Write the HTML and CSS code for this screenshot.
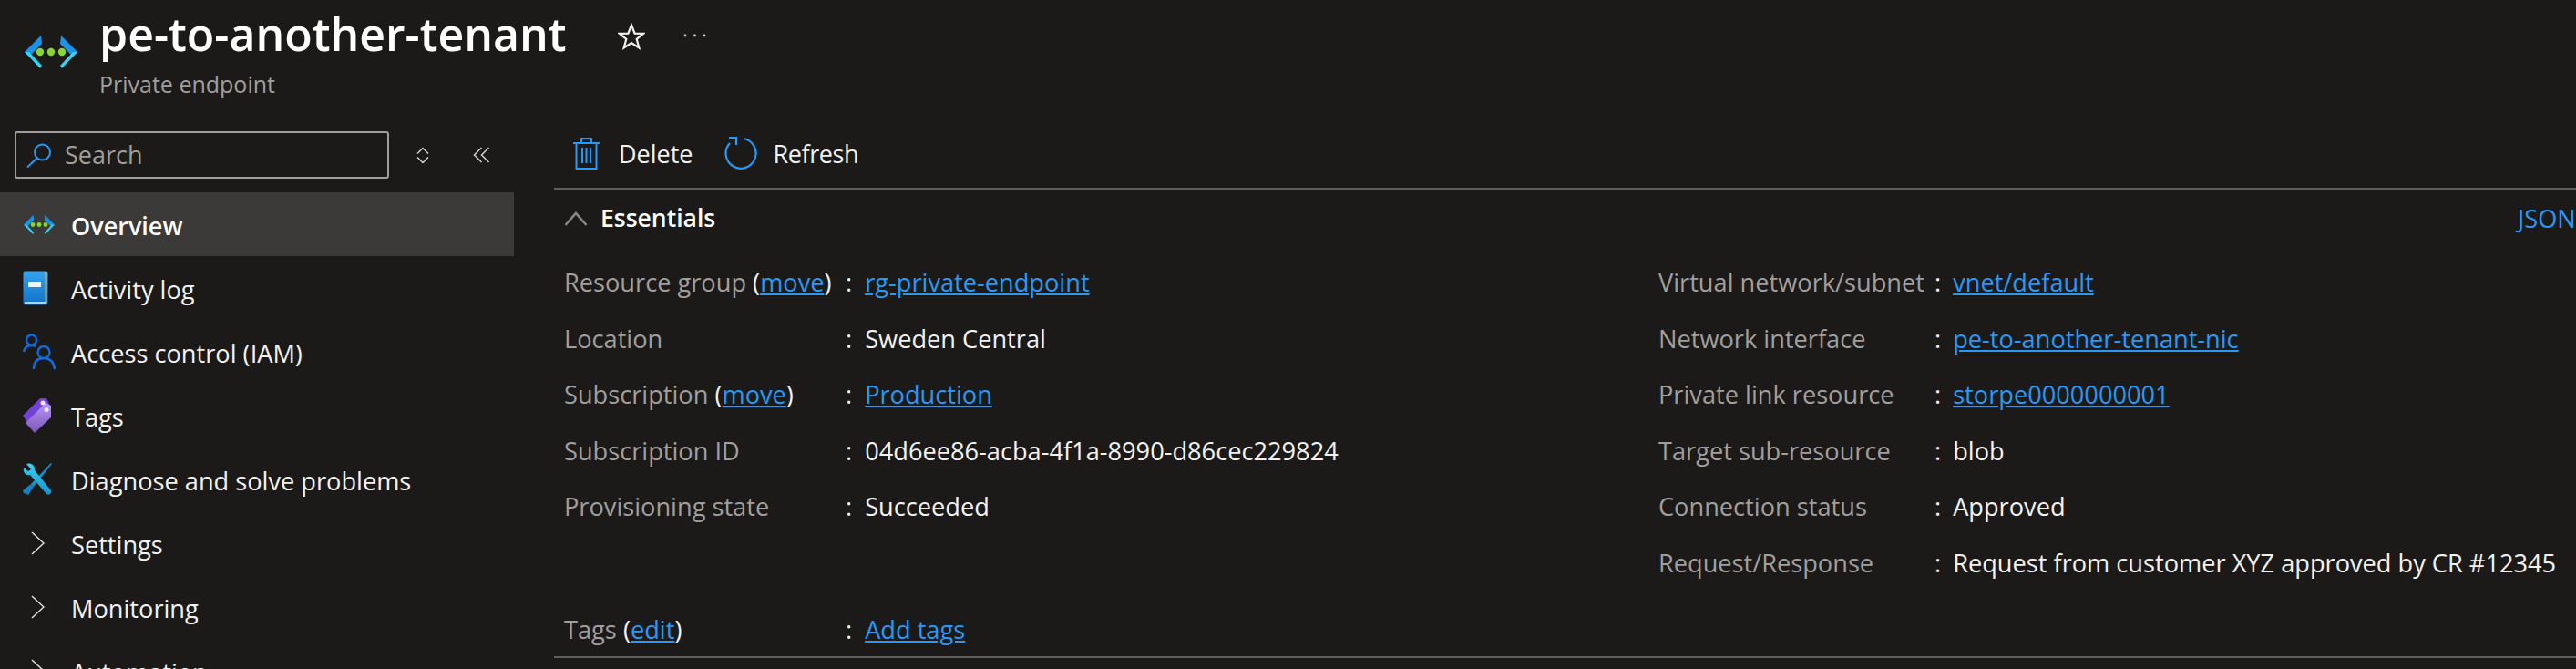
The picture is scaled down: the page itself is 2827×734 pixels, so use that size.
FILE: index.html
```html
<!DOCTYPE html>
<html lang="en">
<head>
<meta charset="utf-8">
<title>pe-to-another-tenant</title>
<link rel="stylesheet" href="styles.css">
</head>
<body>
<svg class="defs" width="0" height="0" aria-hidden="true">
  <defs>
    <linearGradient id="bookG" x1="0" y1="0" x2="0" y2="1"><stop offset="0" stop-color="#37a4ec"/><stop offset="1" stop-color="#0f70c8"/></linearGradient>
    <linearGradient id="tagG" x1="0" y1="0" x2="0" y2="1"><stop offset="0" stop-color="#b796f9"/><stop offset="1" stop-color="#7d55b8"/></linearGradient>
    <linearGradient id="wrenchG" x1="0" y1="0" x2="0" y2="1"><stop offset="0" stop-color="#32d4f5"/><stop offset="1" stop-color="#1a8fca"/></linearGradient>
    <symbol id="pe" viewBox="0 0 62 38">
      <path d="M20 1 L2 19 L7 24 L21 10 Z" fill="#1b93eb"/>
      <path d="M2 19 L19 37 L21 34 L7 19 Z" fill="#32d4f5"/>
      <path d="M42 1 L60 19 L55 24 L41 10 Z" fill="#1b93eb"/>
      <path d="M60 19 L43 37 L41 34 L55 19 Z" fill="#32d4f5"/>
      <circle cx="19" cy="19" r="4.2" fill="#86d633"/>
      <circle cx="31" cy="19" r="4.2" fill="#86d633"/>
      <circle cx="43" cy="19" r="4.2" fill="#86d633"/>
    </symbol>
  </defs>
</svg>

<header class="page-header">
  <svg class="logo" width="62" height="38"><use href="#pe"/></svg>
  <div class="titles">
    <h1 class="title">pe-to-another-tenant</h1>
    <div class="subtitle">Private endpoint</div>
  </div>
  <svg class="star" width="30" height="30" viewBox="0 0 30 30"><path d="M15 2.5 L18.6 11.6 L28 11.9 L20.7 18 L23.3 27.5 L15 22 L6.7 27.5 L9.3 18 L2 11.9 L11.4 11.6 Z" fill="none" stroke="#f3f2f1" stroke-width="2.2" stroke-linejoin="miter"/></svg>
  <svg class="more" width="26" height="4" viewBox="0 0 26 4"><circle cx="2" cy="2" r="1.4" fill="#d2d0ce"/><circle cx="12.500" cy="2" r="1.4" fill="#d2d0ce"/><circle cx="23" cy="2" r="1.4" fill="#d2d0ce"/></svg>
</header>

<div class="layout">
  <nav class="sidebar">
    <div class="search-row">
      <div class="search-box">
        <svg class="search-icon" width="28" height="27" viewBox="0 0 28 27"><circle cx="17.500" cy="10" r="8.500" fill="none" stroke="#2899f5" stroke-width="2"/><path d="M11.500 16.500 L1 26.500" stroke="#2899f5" stroke-width="2" fill="none"/></svg>
        <span class="search-text">Search</span>
      </div>
      <svg class="updown" width="16" height="19" viewBox="0 0 16 19"><path d="M2 7.500 L8 1.500 L14 7.500 M2 11.500 L8 17.500 L14 11.500" fill="none" stroke="#d2d0ce" stroke-width="1.500"/></svg>
      <svg class="collapse" width="19" height="18" viewBox="0 0 19 18"><path d="M9.500 1 L1.500 9 L9.500 17 M17.500 1 L9.500 9 L17.500 17" fill="none" stroke="#d2d0ce" stroke-width="1.500"/></svg>
    </div>
    <ul class="nav">
      <li class="nav-item active"><span class="nav-icon"><svg width="36" height="25"><use href="#pe"/></svg></span>Overview</li>
      <li class="nav-item"><span class="nav-icon"><svg width="28" height="38" viewBox="0 0 28 38"><rect x="0.500" y="0.500" width="27" height="37" rx="2" fill="url(#bookG)"/><path d="M25.500 1 V35 H2" fill="none" stroke="#e8f4fd" stroke-width="1.500"/><rect x="6" y="12" width="14" height="6" fill="#f0f6fb"/></svg></span>Activity log</li>
      <li class="nav-item"><span class="nav-icon"><svg width="36" height="40" viewBox="0 0 36 40"><g fill="none" stroke="#0f6cde" stroke-width="2.400"><circle cx="9.500" cy="7" r="5.500"/><path d="M1 20 C2 15 5 13 9.500 13 C11 13 13 13.500 14 14.500"/><circle cx="23" cy="20.500" r="6.500"/><path d="M12 39 C12 31 16 27 23 27 C30 27 34 31 35 39"/></g></svg></span>Access control (IAM)</li>
      <li class="nav-item"><span class="nav-icon"><svg width="32" height="38" viewBox="0 0 32 38"><path d="M0 19 L19 0 L26 0 L29 6 L29 10 L8 31 Z" fill="#7340d8"/><path d="M3 27 L25 5 L31 8 L31 21 L13 38 Z" fill="url(#tagG)"/><circle cx="22" cy="5" r="2.500" fill="#efe6ff"/><circle cx="26" cy="12.500" r="2.500" fill="#efe6ff"/></svg></span>Tags</li>
      <li class="nav-item"><span class="nav-icon"><svg width="32" height="36" viewBox="0 0 32 36"><path d="M31 0 L32 1 L12 26 L9 23 Z" fill="#1a8fca"/><path d="M9 23 L12 26 L6 35 L1 33 L0 30 Z" fill="#1a7fbf"/><path d="M4 1 C9 -1 14 3 13 8 L31 30 C32 33 29 36 26 34 L8 13 C3 14 0 10 1 5 L6 9 L9 7 Z" fill="url(#wrenchG)"/></svg></span>Diagnose and solve problems</li>
      <li class="nav-item"><span class="nav-icon"><svg class="chev" width="15" height="26" viewBox="0 0 15 26"><path d="M1 1 L14 13 L1 25" fill="none" stroke="#e1dfdd" stroke-width="1.500"/></svg></span>Settings</li>
      <li class="nav-item"><span class="nav-icon"><svg class="chev" width="15" height="26" viewBox="0 0 15 26"><path d="M1 1 L14 13 L1 25" fill="none" stroke="#e1dfdd" stroke-width="1.500"/></svg></span>Monitoring</li>
      <li class="nav-item"><span class="nav-icon"><svg class="chev" width="15" height="26" viewBox="0 0 15 26"><path d="M1 1 L14 13 L1 25" fill="none" stroke="#e1dfdd" stroke-width="1.500"/></svg></span>Automation</li>
    </ul>
  </nav>

  <main class="content">
    <div class="toolbar">
      <button class="tool delete">
        <svg width="29" height="35" viewBox="0 0 29 35"><g fill="none" stroke="#2899f5" stroke-width="2"><path d="M0 6 H29"/><path d="M9 6 V1 H20 V6"/><path d="M3.500 6 V34 H25.500 V6"/><path d="M10 11 V28 M14.500 11 V28 M19 11 V28"/></g></svg>
        <span>Delete</span>
      </button>
      <button class="tool refresh">
        <svg width="36" height="36" viewBox="0 0 36 36"><g fill="none" stroke="#2899f5" stroke-width="2.200"><path d="M21 2 A16.500 16.500 0 1 1 6 7"/><path d="M4 1 L12 1 L12 9" transform="translate(1 0)"/></g></svg>
        <span>Refresh</span>
      </button>
    </div>

    <section class="essentials">
      <div class="ess-head">
        <svg class="ess-chev" width="26" height="16" viewBox="0 0 26 16"><path d="M1.500 15 L13 2 L24.500 15" fill="none" stroke="#8a8886" stroke-width="2.500"/></svg>
        <h2 class="ess-title">Essentials</h2>
        <a class="link json" href="#">JSON</a>
      </div>
      <div class="ess-cols">
        <dl class="col col-left">
          <div class="row"><dt>Resource group <b>(</b><a class="link" href="#">move</a><b>)</b></dt><dd><a class="link" href="#">rg-private-endpoint</a></dd></div>
          <div class="row"><dt>Location</dt><dd>Sweden Central</dd></div>
          <div class="row"><dt>Subscription <b>(</b><a class="link" href="#">move</a><b>)</b></dt><dd><a class="link" href="#">Production</a></dd></div>
          <div class="row"><dt>Subscription ID</dt><dd>04d6ee86-acba-4f1a-8990-d86cec229824</dd></div>
          <div class="row"><dt>Provisioning state</dt><dd>Succeeded</dd></div>
        </dl>
        <dl class="col col-right">
          <div class="row"><dt>Virtual network/subnet</dt><dd><a class="link" href="#">vnet/default</a></dd></div>
          <div class="row"><dt>Network interface</dt><dd><a class="link" href="#">pe-to-another-tenant-nic</a></dd></div>
          <div class="row"><dt>Private link resource</dt><dd><a class="link" href="#">storpe0000000001</a></dd></div>
          <div class="row"><dt>Target sub-resource</dt><dd>blob</dd></div>
          <div class="row"><dt>Connection status</dt><dd>Approved</dd></div>
          <div class="row"><dt>Request/Response</dt><dd>Request from customer XYZ approved by CR #12345</dd></div>
        </dl>
      </div>
      <dl class="col col-left tags-row">
        <div class="row"><dt>Tags <b>(</b><a class="link" href="#">edit</a><b>)</b></dt><dd><a class="link" href="#">Add tags</a></dd></div>
      </dl>
    </section>
  </main>
</div>
</body>
</html>
```

FILE: styles.css
```css
* { box-sizing: border-box; }
html, body { margin: 0; padding: 0; height: 734px; overflow: hidden; background: #1b1a19; }
body { font-family: "Open Sans", "Noto Sans", sans-serif; font-size: 27.2px; color: #f3f2f1; width: 2827px; }
.defs { position: absolute; }

.page-header { display: flex; align-items: flex-start; height: 143px; padding-left: 25px; }
.logo { margin-top: 38px; flex: none; }
.titles { margin-left: 22px; width: 569px; }
.title { margin: 0; font-size: 50px; line-height: 68px; font-weight: 600; color: #fff; padding-top: 3px; }
.subtitle { font-size: 25px; line-height: 34px; color: #a19f9d; margin-top: 4px; }
.star { margin-top: 25px; flex: none; }
.more { margin: 37px 0 0 42px; flex: none; }

.layout { display: flex; height: 591px; }
.sidebar { width: 564px; flex: none; }
.search-row { display: flex; align-items: center; height: 68px; padding-left: 16px; }
.search-box { display: flex; align-items: center; width: 411px; height: 52px; margin-top: -14px; border: 2px solid #a19f9d; border-radius: 3px; padding-left: 11px; }
.search-text { color: #a19f9d; margin-left: 14px; line-height: 30px; font-size: 27px; }
.updown { margin: -14px 0 0 29px; }
.collapse { margin: -14px 0 0 47px; }

.nav { list-style: none; margin: 0; padding: 0; }
.nav-item { display: flex; align-items: center; height: 70px; padding-top: 3px; white-space: nowrap; color: #f3f2f1; }
.nav-item.active { background: #3b3a39; font-weight: 600; font-size: 27px; color: #fff; }
.nav-icon { width: 78px; padding-left: 25px; flex: none; display: flex; align-items: center; margin-top: -3px; }
.nav-icon .chev { margin-left: 9px; }

.content { flex: 1; min-width: 0; padding-left: 44px; }
.toolbar { display: flex; height: 66px; border-bottom: 2px solid #605e5c; padding: 0 0 10px 21px; margin-top: -1px; align-items: center; }
.tool { display: flex; align-items: center; background: none; border: 0; padding: 0; color: #f3f2f1; font: inherit; font-size: 27px; margin-top: -2px; }
.tool svg { flex: none; }
.delete span { margin-left: 21px; }
.refresh { margin-left: 34px; }
.refresh span { margin-left: 18px; letter-spacing: -0.4px; }

.essentials { border-bottom: 2px solid #605e5c; padding-left: 11px; height: 514px; width: 2300px; }
.ess-head { display: flex; align-items: center; height: 52px; padding-top: 10px; }
.ess-chev { flex: none; margin-top: 2px; }
.ess-title { margin: 0 0 0 14px; font-size: 26.500px; font-weight: 600; color: #fff; }
.link { color: #2899f5; text-decoration: underline; }
.link.json { margin-left: auto; text-decoration: none; white-space: nowrap; width: 145px; flex: none; }
.ess-cols { display: flex; margin-top: 19px; }
.col { margin: 0; }
.col-left { width: 1201px; }
.row { display: flex; height: 61.500px; align-items: center; white-space: nowrap; }
.row dt { color: #a19f9d; }
.row dt b { color: #f3f2f1; font-weight: 400; }
.row dd { margin: 0; color: #f3f2f1; }
.row dd::before { content: ":"; color: #f3f2f1; margin-right: 14px; }
.col-left dt { width: 309px; flex: none; }
.col-right dt { width: 303px; flex: none; }
.col-right dd::before { margin-right: 13px; }
.tags-row { margin-top: 12px; }
```
